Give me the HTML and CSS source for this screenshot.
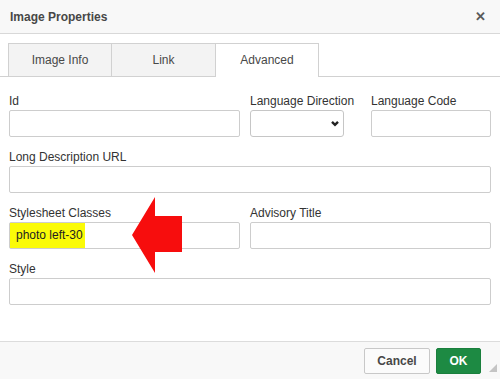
FILE: index.html
```html
<!DOCTYPE html>
<html>
<head>
    <meta name="viewport" content="width=device-width, initial-scale=1.0">
    <title>Image Properties</title>
    <link rel="stylesheet" href="styles.css">
</head>
<body>
    <div class="dialog">
        <div class="titlebar">
            <span class="title">Image Properties</span>
            <span class="close">&#x2715;</span>
        </div>
        <div class="tabs">
            <div class="tab">Image Info</div>
            <div class="tab tab-link">Link</div>
            <div class="tab active">Advanced</div>
        </div>
        <div class="content">
            <div class="row row-three">
                <div class="field">
                    <label>Id</label>
                    <input type="text" class="text-input">
                </div>
                <div class="field">
                    <label>Language Direction</label>
                    <div class="select">
                        <svg width="10" height="7" viewBox="0 0 10 7"><path d="M2 1.8 L5 4.8 L8 1.8" fill="none" stroke="#222" stroke-width="2.4"/></svg>
                    </div>
                </div>
                <div class="field">
                    <label>Language Code</label>
                    <input type="text" class="text-input">
                </div>
            </div>
            <div class="row">
                <div class="field">
                    <label>Long Description URL</label>
                    <input type="text" class="text-input">
                </div>
            </div>
            <div class="row row-two">
                <div class="field">
                    <label>Stylesheet Classes</label>
                    <div class="text-input filled"><span class="highlight">photo left-30</span></div>
                </div>
                <div class="field">
                    <label>Advisory Title</label>
                    <input type="text" class="text-input">
                </div>
            </div>
            <div class="row">
                <div class="field">
                    <label>Style</label>
                    <input type="text" class="text-input">
                </div>
            </div>
            <svg class="arrow" width="52" height="78" viewBox="0 0 52 78">
                <polygon points="0,38 23,0 23,19 50,19 50,55 23,55 23,76" fill="#f70d0d"/>
            </svg>
        </div>
        <div class="footer">
            <button class="btn cancel">Cancel</button>
            <button class="btn ok">OK</button>
            <svg class="grip" width="8" height="8" viewBox="0 0 8 8"><polygon points="8,0 8,8 0,8" fill="#c4c4c4"/></svg>
        </div>
    </div>
</body>
</html>
```

FILE: styles.css
```css
body {
    margin: 0;
    font-family: "Liberation Sans", Arial, sans-serif;
    font-size: 12px;
    color: #333;
    background: #fff;
}
.dialog {
    width: 500px;
    height: 379px;
    display: flex;
    flex-direction: column;
}
.titlebar {
    height: 33px;
    background: #f8f8f8;
    border-bottom: 1px solid #d8d8d8;
    display: flex;
    align-items: center;
    justify-content: space-between;
    padding: 0 14px 0 10px;
}
.title {
    font-weight: bold;
    color: #474747;
    font-size: 12px;
}
.close {
    font-weight: bold;
    color: #5a5a5a;
    font-size: 13px;
}
.tabs {
    display: flex;
    padding: 9px 0 0 8px;
    border-bottom: 1px solid #d1d1d1;
    height: 33px;
}
.tab {
    width: 103px;
    height: 33px;
    box-sizing: border-box;
    border: 1px solid #d1d1d1;
    border-bottom: none;
    border-right: none;
    background: #f3f3f3;
    text-align: center;
    line-height: 33px;
    color: #484848;
}
.tab-link {
    width: 104px;
}
.tab.active {
    background: #fff;
    border-right: 1px solid #d1d1d1;
    height: 34px;
    width: 104px;
    margin-bottom: -1px;
}
.content {
    position: relative;
    flex: 1;
    padding: 17px 9px 0 9px;
}
.row {
    display: grid;
    gap: 10px;
    margin-bottom: 13px;
}
.row-three {
    grid-template-columns: 231px 111px 120px;
}
.row-two {
    grid-template-columns: 231px 241px;
}
.field {
    display: flex;
    flex-direction: column;
}
.field label {
    line-height: 14px;
    margin-bottom: 2px;
    white-space: nowrap;
    color: #333;
}
.text-input {
    height: 27px;
    box-sizing: border-box;
    border: 1px solid #cdcdcd;
    border-radius: 2px;
    margin: 0;
    padding: 0;
    width: 100%;
    background: #fff;
}
.filled {
    display: flex;
    align-items: stretch;
}
.highlight {
    background: #fbfb08;
    width: 75px;
    padding-left: 6px;
    box-sizing: border-box;
    line-height: 25px;
    color: #222;
}
.select {
    width: 94px;
    height: 27px;
    box-sizing: border-box;
    border: 1px solid #c6c6c6;
    border-radius: 3px;
    display: flex;
    align-items: center;
    justify-content: flex-end;
    padding-right: 3px;
}
.arrow {
    position: absolute;
    left: 132px;
    top: 120px;
}
.footer {
    height: 37px;
    background: #f8f8f8;
    border-top: 1px solid #dcdcdc;
    display: flex;
    align-items: center;
    justify-content: flex-end;
    gap: 6px;
    padding-right: 19px;
    position: relative;
}
.btn {
    height: 26px;
    font-family: "Liberation Sans", Arial, sans-serif;
    font-size: 12px;
    font-weight: bold;
    border-radius: 2px;
    padding: 0;
}
.cancel {
    width: 66px;
    background: #fbfbfb;
    border: 1px solid #c8c8c8;
    color: #474747;
}
.ok {
    width: 45px;
    background: #1d8a43;
    border: 1px solid #1a7f3d;
    color: #fff;
}
.grip {
    position: absolute;
    right: 3px;
    bottom: 7px;
}
```
